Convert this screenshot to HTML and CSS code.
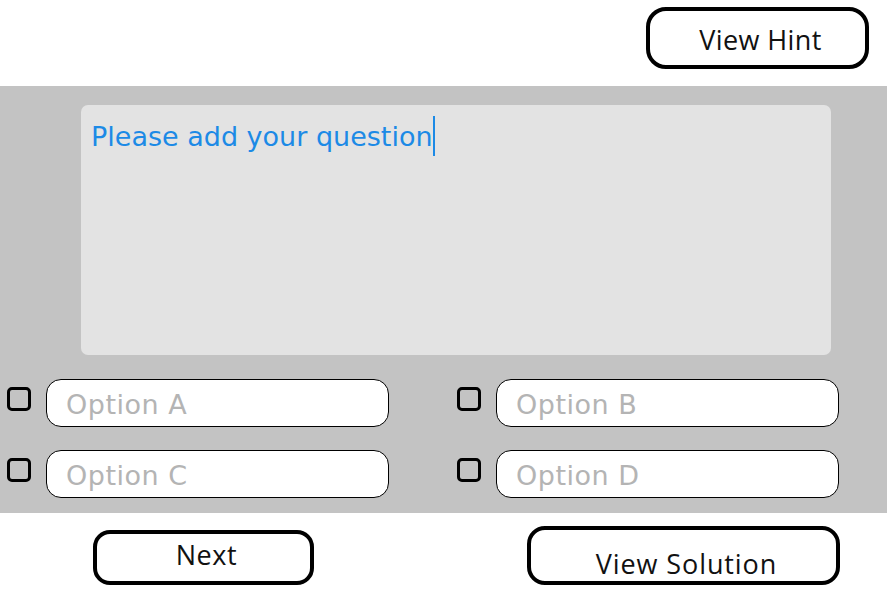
FILE: index.html
```html
<!DOCTYPE html>
<html>
<head>
<meta charset="utf-8">
<link rel="stylesheet" href="styles.css">
</head>
<body>
<header class="top">
  <button class="btn btn-hint">View Hint</button>
</header>
<section class="panel">
  <div class="question"><span class="qtext">Please add your question</span><span class="caret"></span></div>
  <div class="options">
    <div class="opt"><span class="check"></span><div class="field">Option A</div></div>
    <div class="opt"><span class="check"></span><div class="field">Option B</div></div>
    <div class="opt"><span class="check"></span><div class="field">Option C</div></div>
    <div class="opt"><span class="check"></span><div class="field">Option D</div></div>
  </div>
</section>
<footer class="bottom">
  <button class="btn btn-next">Next</button>
  <button class="btn btn-solution">View Solution</button>
</footer>
</body>
</html>
```
FILE: styles.css
```css
html, body {
  margin: 0;
  padding: 0;
  background: #ffffff;
  width: 887px;
  height: 599px;
  overflow: hidden;
}
.btn {
  box-sizing: border-box;
  background: #ffffff;
  border: 4px solid #000000;
  border-radius: 20px;
  font-family: "Open Sans", "Noto Sans", sans-serif;
  font-size: 27px;
  letter-spacing: 0.2px;
  color: #111111;
  padding: 0;
  line-height: 1;
}
.top {
  height: 86px;
  box-sizing: border-box;
  padding: 7px 18px 0 0;
  display: flex;
  justify-content: flex-end;
  align-items: flex-start;
}
.btn-hint {
  width: 223px;
  height: 62px;
  padding-top: 2px;
  padding-left: 6px;
  letter-spacing: 0.4px;
}
.panel {
  background: #c3c3c3;
  height: 427px;
  box-sizing: border-box;
  padding-top: 19px;
}
.question {
  margin-left: 81px;
  width: 750px;
  height: 250px;
  background: #e3e3e3;
  border-radius: 7px;
  box-sizing: border-box;
  padding: 14px 0 0 10px;
  display: flex;
  align-items: flex-start;
}
.qtext {
  font-family: "Comic Sans MS", "DejaVu Sans", sans-serif;
  font-size: 27px;
  letter-spacing: 0px;
  color: #1c8ae6;
  line-height: 36px;
}
.caret {
  width: 2px;
  height: 40px;
  background: #1c8ae6;
  margin-top: -3px;
}
.options {
  display: grid;
  grid-template-columns: 450px 437px;
  row-gap: 23px;
  margin-top: 24px;
  padding-left: 7px;
}
.opt {
  display: flex;
  align-items: flex-start;
  gap: 15px;
}
.check {
  width: 24px;
  height: 24px;
  box-sizing: border-box;
  border: 3px solid #000000;
  border-radius: 5px;
  margin-top: 8px;
  flex: none;
}
.field {
  width: 343px;
  height: 48px;
  box-sizing: border-box;
  background: #ffffff;
  border: 1.5px solid #000000;
  border-radius: 15px;
  padding-left: 19px;
  font-family: "Comic Sans MS", "DejaVu Sans", sans-serif;
  font-size: 27px;
  letter-spacing: 0.5px;
  color: #b4b4b4;
  line-height: 50px;
}
.bottom {
  display: flex;
  align-items: flex-start;
  padding-left: 93px;
}
.btn-next {
  width: 221px;
  height: 55px;
  margin-top: 17px;
  border-radius: 17px;
  padding-bottom: 6px;
  padding-left: 6px;
  letter-spacing: 0.6px;
}
.btn-solution {
  width: 313px;
  height: 59px;
  margin-top: 13px;
  margin-left: 213px;
  border-radius: 18px;
  padding-top: 16px;
  padding-left: 6px;
  letter-spacing: 0.9px;
}
```
